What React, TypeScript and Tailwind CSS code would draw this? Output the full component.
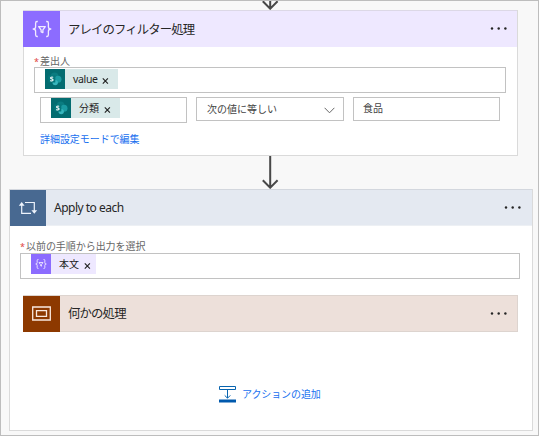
import React from "react";

const jp = "font-['Noto_Sans','Noto_Sans_CJK_JP',sans-serif]";

function Dots() {
  return (
    <svg className="block shrink-0" width="18" height="4" viewBox="0 0 18 4" fill="#252525">
      <circle cx="2" cy="1.5" r="1.2" />
      <circle cx="8.7" cy="1.5" r="1.2" />
      <circle cx="15.4" cy="1.5" r="1.2" />
    </svg>
  );
}

function FilterIcon({ size, thin }: { size: number; thin?: boolean }) {
  return (
    <svg
      width={size}
      height={size}
      viewBox="0 0 20 20"
      fill="none"
      stroke="#f1ebff"
      strokeWidth={thin ? 1.5 : 1.3}
      strokeLinejoin="round"
    >
      <path d="M5.8 2.5H5Q3.6 2.5 3.6 4.2V7.8Q3.6 10 1.2 10Q3.6 10 3.6 12.2V15.8Q3.6 17.5 5 17.5H5.8" />
      <path d="M14.2 2.5H15Q16.4 2.5 16.4 4.2V7.8Q16.4 10 18.8 10Q16.4 10 16.4 12.2V15.8Q16.4 17.5 15 17.5H14.2" />
      <path d="M6.7 7.6H13.3L10.9 10.9V13.6L9.1 12.8V10.9Z" />
    </svg>
  );
}

function SharePointIcon() {
  return (
    <svg className="block shrink-0" width="20" height="20" viewBox="0 0 20 20">
      <rect width="20" height="20" fill="#036c70" />
      <circle cx="9.6" cy="7.3" r="3.9" fill="#0a7c80" />
      <circle cx="13" cy="10.3" r="3.5" fill="#1a9ba1" />
      <circle cx="10.2" cy="13.6" r="2.7" fill="#37b6bd" />
      <rect x="3.3" y="6.5" width="7" height="7" rx=".6" fill="#04777b" />
      <path
        d="M8.2 8.4Q7.5 7.9 6.7 8Q5.6 8.1 5.6 8.9Q5.6 9.6 6.8 9.9Q8.1 10.3 8.1 11Q8.1 11.9 6.8 12Q6 12 5.3 11.5"
        fill="none"
        stroke="#fff"
        strokeWidth="1.1"
      />
    </svg>
  );
}

function Cross() {
  return (
    <svg className="mt-1 block shrink-0" width="7" height="6" viewBox="0 0 7 6" stroke="#222" strokeWidth="1.1">
      <path d="M.8 .4L5.9 5.6M5.9 .4L.8 5.6" />
    </svg>
  );
}

function Arrow({ height }: { height: number }) {
  return (
    <svg className="block" width="18" height={height} viewBox={`0 0 18 ${height}`} fill="none" stroke="#484848" strokeWidth="2">
      <path d={`M9.2 0V${height - 1.5}M1.8 ${height - 8.8}L9.2 ${height - 1.3}L16.6 ${height - 8.8}`} />
    </svg>
  );
}

function Label({ children }: { children: React.ReactNode }) {
  return (
    <div className="flex h-[11px] items-center text-[10px] leading-[11px] whitespace-nowrap text-[#666]">
      <span className="w-[6px] text-[9px] text-[#e04343]">*</span>
      <span className="tracking-[-0.05px]">{children}</span>
    </div>
  );
}

function SharePointToken({ children, width }: { children: React.ReactNode; width: string }) {
  return (
    <div className={`flex h-5 items-center bg-[#d9e9e9] text-[10px] leading-5 text-[#242424] ${width}`}>
      <SharePointIcon />
      <span className="ml-2 mr-[5px] whitespace-nowrap">{children}</span>
      <Cross />
    </div>
  );
}

export default function App() {
  return (
    <div className={`flex h-[436px] w-[539px] flex-col overflow-hidden border border-[#bdbdbd] bg-[#f8f8f8] ${jp}`}>
      <div className="flex h-[9px] shrink-0 items-end pl-[260px]">
        <Arrow height={9} />
      </div>

      <section className="ml-[22px] h-[146px] w-[495px] shrink-0 border border-[#dadada] bg-white">
        <header className="-ml-px -mt-px flex h-[37px] w-[494px] items-center border-t border-[#dcd8e6] bg-[#eee8ff]">
          <div className="flex h-9 w-[37px] items-center justify-center bg-[#8c6cff]">
            <FilterIcon size={20} />
          </div>
          <h2 className="ml-2 whitespace-nowrap pt-px text-[12.4px] leading-5 tracking-[-0.9px] text-[#262626]">アレイのフィルター処理</h2>
          <div className="ml-auto mr-[9px]"><Dots /></div>
        </header>
        <div className="pl-[10px] pt-[9px]">
          <Label>差出人</Label>
          <div className="h-[26px] w-[472px] border border-[#c2c2c2] pl-[10px] pt-px">
            <SharePointToken width="w-[73px]">
              <span className="inline-block w-[24px] text-[10.5px] tracking-[-0.35px]">value</span>
            </SharePointToken>
          </div>
          <div className="ml-[6px] mt-1 flex items-start text-[10px] leading-[22px] text-[#444]">
            <div className="h-[26px] w-[147px] border border-[#c2c2c2] pl-[10px]">
              <SharePointToken width="w-[69px]">分類</SharePointToken>
            </div>
            <div className="ml-[9px] flex h-6 w-[148px] items-center border border-[#c2c2c2] pl-[10px] pr-2">
              <span className="whitespace-nowrap">次の値に等しい</span>
              <svg className="ml-auto mt-[3px]" width="11" height="7" viewBox="0 0 11 7" fill="none" stroke="#666">
                <path d="M.6 .8L5.5 5.8L10.4 .8" />
              </svg>
            </div>
            <div className="ml-[9px] h-6 w-[147px] border border-[#c2c2c2] pl-[9px] leading-[21px]">食品</div>
          </div>
          <a className="ml-[6px] mt-[6px] block whitespace-nowrap text-[10px] leading-5 tracking-[-0.05px] text-[#1870ef]">詳細設定モードで編集</a>
        </div>
      </section>

      <div className="h-[33px] shrink-0 pl-[260px]">
        <Arrow height={33} />
      </div>

      <section className="ml-2 h-[242px] w-[524px] shrink-0 border border-[#dadada] bg-white">
        <header className="-mt-px flex h-[37px] items-center border-y border-t-[#d3d7de] border-b-[#edf0f4] bg-[#e4e9f1]">
          <div className="flex h-9 w-9 items-center justify-center bg-[#486991]">
            <svg width="20" height="16" viewBox="0 0 20 16" fill="none" stroke="#edf3fc" strokeWidth="1.2">
              <path d="M7 2.5H16.3V11M13 13.4H3.7V5" />
              <path d="M13.4 10.2H19.2L16.3 13.8ZM.8 5.7H6.6L3.7 2.1Z" fill="#edf3fc" stroke="none" />
            </svg>
          </div>
          <h2 className="ml-2 whitespace-nowrap pt-px text-[12px] leading-5 tracking-[-0.5px] text-[#262626]">Apply to each</h2>
          <div className="ml-auto mr-[10px]"><Dots /></div>
        </header>
        <div className="pl-[10px] pt-[15px]">
          <Label>以前の手順から出力を選択</Label>
          <div className="mt-px h-[26px] w-[500px] border border-[#c2c2c2] pl-[10px]">
            <div className="flex h-5 w-[65px] items-center bg-[#eee8ff] text-[10px] leading-5 text-[#242424]">
              <div className="flex h-5 w-5 items-center justify-center bg-[#8c6cff]">
                <FilterIcon size={12} thin />
              </div>
              <span className="ml-2 mr-[5px] whitespace-nowrap">本文</span>
              <Cross />
            </div>
          </div>
          <div className="ml-[3px] mt-4 flex h-[37px] w-[495px] items-center border border-[#ddd4cf] bg-[#ede0da]">
            <div className="-ml-px flex h-[36px] w-[37px] items-center justify-center bg-[#8d3900]">
              <svg width="19" height="15" viewBox="0 0 19 15" fill="none" stroke="#f9e9df" strokeWidth="1.3">
                <path d="M.7 1H18.3V14H.7ZM4.5 4.7H14.5V10.3H4.5Z" />
              </svg>
            </div>
            <h2 className="ml-2 whitespace-nowrap pt-px text-[12.4px] leading-5 tracking-[-0.85px] text-[#262626]">何かの処理</h2>
            <div className="ml-auto mr-[9px]"><Dots /></div>
          </div>
        </div>
        <div className="ml-[209px] mt-[52px] flex h-5 items-center text-[#1870ef]">
          <svg width="17" height="18" viewBox="0 0 17 18" fill="none" stroke="#0864af">
            <path d="M.5 1.5H16.5V4.5H.5ZM8.5 5V13M5.7 10.4L8.5 13.2L11.3 10.4" />
            <path d="M0 14.5H17V17.5H0Z" fill="#0059ad" stroke="none" />
          </svg>
          <span className="ml-[6px] whitespace-nowrap text-[10px] leading-5 tracking-[-0.1px]">アクションの追加</span>
        </div>
      </section>
    </div>
  );
}
